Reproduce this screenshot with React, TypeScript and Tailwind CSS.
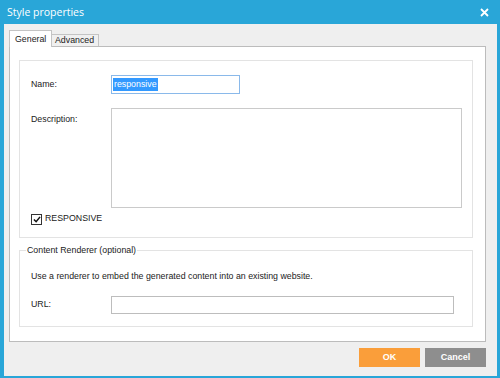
import React from 'react';

const font = { fontFamily: '"Liberation Sans", Arial, sans-serif' };

const App = () => {
  return (
    <div className="w-[500px] h-[378px] bg-[#29a6d8] flex flex-col overflow-hidden" style={font}>
      <div className="h-[24px] flex items-center justify-between pl-[7px] pr-[11px]">
        <span className="text-white text-[10.5px] leading-none" style={{ fontFamily: '"Open Sans", "Noto Sans", sans-serif' }}>
          Style properties
        </span>
        <svg width="9" height="9" viewBox="0 0 9 9">
          <path d="M1 1 L8 8 M8 1 L1 8" stroke="white" strokeWidth="1.8" />
        </svg>
      </div>
      <div className="flex-1 ml-[4px] mr-[3px] mb-[2px] bg-[#efefef] flex flex-col pl-[5px] pr-[11px] text-[8.8px] text-[#222]">
        <div className="flex items-end h-[22px] relative z-10">
          <div className="h-[17px] w-[43px] bg-white border border-[#c4c4c4] border-b-0 pl-[5px] pt-[3px] mb-[-1px] leading-[11px]">
            General
          </div>
          <div className="h-[12px] w-[47px] bg-[#f0f0f0] border border-[#c4c4c4] border-l-0 border-b-0 pl-[3px] leading-[11px]">
            Advanced
          </div>
        </div>
        <div className="h-[296px] bg-white border border-[#bcbcbc] pt-[13px] pl-[9px] pr-[12px] flex flex-col">
          <div className="h-[178px] border border-[#e3e3e3] pl-[11px] pt-[14px] pr-[10px] flex flex-col">
            <div className="flex items-center h-[19px]">
              <span className="w-[80px]">Name:</span>
              <div className="w-[129px] h-[19px] border border-[#8ab9ea] flex items-center px-[1px]">
                <span className="bg-[#3399ff] text-white leading-[13px] px-[1px]">responsive</span>
              </div>
            </div>
            <div className="flex mt-[14px]">
              <span className="w-[80px] pt-[5px]">Description:</span>
              <div className="flex-1 h-[100px] border border-[#cacaca]"></div>
            </div>
            <div className="flex items-center mt-[5px] h-[12px]">
              <div className="w-[11px] h-[11px] border border-[#333] flex items-center justify-center">
                <svg width="8" height="7" viewBox="0 0 9 8">
                  <path d="M1 4 L3.5 6.5 L8 1" stroke="#111" strokeWidth="1.8" fill="none" />
                </svg>
              </div>
              <span className="ml-[3px]">RESPONSIVE</span>
            </div>
          </div>
          <div className="relative h-[77px] mt-[12px] border border-[#e3e3e3] pl-[11px] pr-[18px] flex flex-col">
            <span className="absolute -top-[7px] left-[6px] bg-white px-[1px] leading-[13px]">Content Renderer (optional)</span>
            <div className="mt-[19px] leading-[13px]">Use a renderer to embed the generated content into an existing website.</div>
            <div className="flex items-center mt-[13px]">
              <span className="w-[80px]">URL:</span>
              <div className="flex-1 h-[18px] border border-[#bdbdbd]"></div>
            </div>
          </div>
        </div>
        <div className="flex justify-end gap-[5px] mt-[6px]">
          <button className="w-[61px] h-[19px] bg-[#fa9e3a] text-white text-[9px] font-bold">OK</button>
          <button className="w-[61px] h-[19px] bg-[#8e8e8e] text-white text-[9px] font-bold">Cancel</button>
        </div>
      </div>
    </div>
  );
};

export default App;
